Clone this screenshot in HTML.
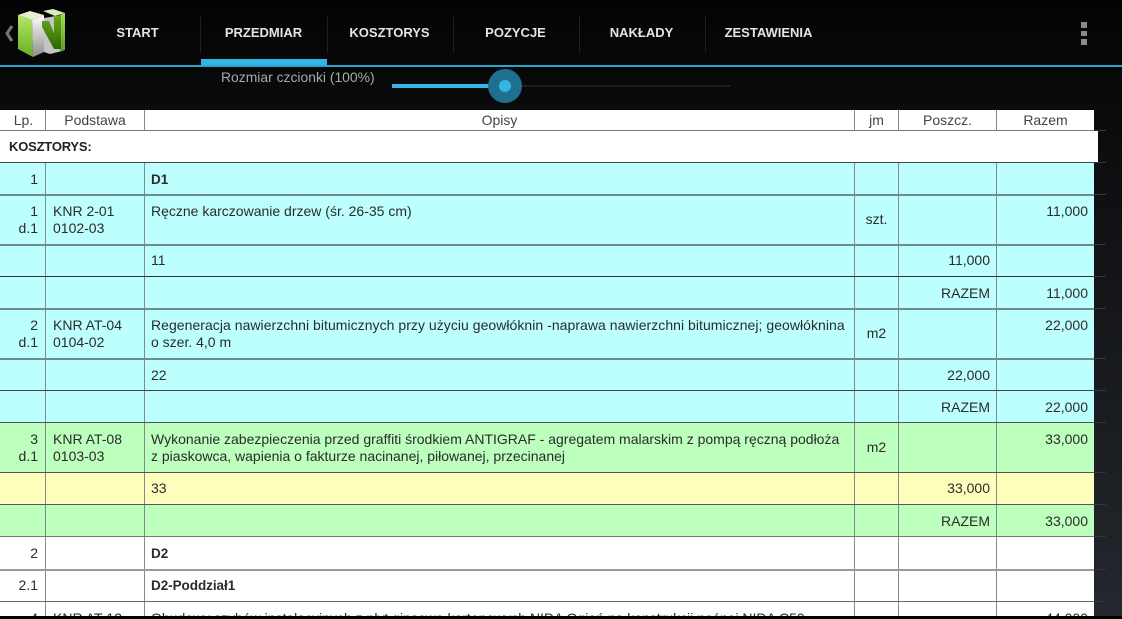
<!DOCTYPE html>
<html lang="pl"><head><meta charset="utf-8"><title>Przedmiar</title>
<style>
html,body{margin:0;padding:0;background:#000;width:1122px;height:619px;overflow:hidden}
#p{position:relative;width:1122px;height:619px;overflow:hidden;font-family:"Liberation Sans",sans-serif}
#bg{position:absolute;left:0;top:0;width:1122px;height:619px;background:linear-gradient(#030303 0,#0a0b0c 110px,#14161a 300px,#23262c 600px)}
.a{position:absolute}
.t{position:absolute;white-space:nowrap;font-size:14px;line-height:18px;color:#2b2b2b;margin-top:-1px}
.r{text-align:right}.c{text-align:center}.b{font-weight:bold;font-size:13.5px;letter-spacing:-.05px;margin-top:0}
.tab{position:absolute;top:25px;font-size:13px;line-height:16px;font-weight:bold;color:#e4e4e4;white-space:nowrap;text-align:center}
.sep{position:absolute;top:15px;width:1px;height:38px;background:#1e1e1e}
.row{position:absolute;left:0;width:1094px}
.h{position:absolute;left:0;width:1094px;height:1px}
.v{position:absolute;width:1px;top:110px;height:507px;background:#7f8c8c}
.tick{position:absolute;left:1094px;width:12px;height:1px;background:#33363b}
</style></head><body><div id="p">
<div id="bg"></div>

<svg class="a" style="left:0;top:0" width="80" height="62" viewBox="0 0 80 62">
<defs>
<linearGradient id="g1" x1="0" y1="0" x2="0" y2="1"><stop offset="0" stop-color="#b4e864"/><stop offset="1" stop-color="#68ad2a"/></linearGradient>
<linearGradient id="g2" x1="0" y1="0" x2="0" y2="1"><stop offset="0" stop-color="#ffffff"/><stop offset="1" stop-color="#8c8c8c"/></linearGradient>
<linearGradient id="g3" x1="0" y1="0" x2="0" y2="1"><stop offset="0" stop-color="#6cab1c"/><stop offset="1" stop-color="#2c6604"/></linearGradient>
<linearGradient id="g4" x1="0" y1="0" x2="0" y2="1"><stop offset="0" stop-color="#a6dc58"/><stop offset="1" stop-color="#5f9c28"/></linearGradient>
</defs>
<path d="M12 26 L7 33.5 L12 41" fill="none" stroke="#777" stroke-width="3"/>
<path d="M18 15 L32 20 L33 57 L18 49 Z" fill="url(#g1)"/>
<path d="M18 15 L30 11 L44 15 L32 20 Z" fill="#e3f2cf"/>
<path d="M44 18 L62 15 L62 51 L50 54 L44 52 Z" fill="#c4c4c4"/>
<path d="M32 20 L44 15 L44 52 L33 57 Z" fill="url(#g2)"/>
<path d="M43 11 L53 9 L65 13 L55 16 Z" fill="#d6edb8"/>
<path d="M60 15 L65 13 L65 50 L60 52 Z" fill="url(#g4)"/>
<path d="M42 21 L49 21 L54 33 L54 17 L61 15 L61 49 L54 49 L42 27 Z" fill="url(#g3)"/>
</svg>

<div class="tab" style="left:75px;width:125px">START</div>
<div class="tab" style="left:201px;width:125px">PRZEDMIAR</div>
<div class="tab" style="left:327px;width:125px">KOSZTORYS</div>
<div class="tab" style="left:453px;width:125px">POZYCJE</div>
<div class="tab" style="left:579px;width:125px">NAKŁADY</div>
<div class="tab" style="left:706px;width:125px">ZESTAWIENIA</div>
<div class="sep" style="left:200px"></div>
<div class="sep" style="left:327px"></div>
<div class="sep" style="left:453px"></div>
<div class="sep" style="left:579px"></div>
<div class="sep" style="left:705px"></div>
<div class="a" style="left:201px;top:59px;width:126px;height:6px;background:#33b5e5"></div>
<div class="a" style="left:0;top:65px;width:1122px;height:2px;background:#2ba3cf"></div>
<div class="a" style="left:1081px;top:22px;width:6px;height:6px;background:#8a8a8a"></div>
<div class="a" style="left:1081px;top:31px;width:6px;height:5px;background:#8a8a8a"></div>
<div class="a" style="left:1081px;top:39px;width:6px;height:6px;background:#8a8a8a"></div>

<div class="t" style="left:221px;top:68px;color:#a8a8a8;font-size:13.9px;margin-top:0">Rozmiar czcionki (100%)</div>
<div class="a" style="left:392px;top:85px;width:338px;height:2px;background:#1c1e20"></div>
<div class="a" style="left:392px;top:84px;width:113px;height:4px;background:#33b5e5"></div>
<div class="a" style="left:488px;top:69px;width:34px;height:34px;border-radius:50%;background:#1f6f8f"></div>
<div class="a" style="left:499px;top:80px;width:12px;height:12px;border-radius:50%;background:#33b5e5"></div>

<!-- backgrounds -->
<div class="row" style="top:110px;height:20px;background:#fff"></div>
<div class="row" style="top:163px;height:259px;background:#bdffff"></div>
<div class="row" style="top:422px;height:50px;background:#bdffbd"></div>
<div class="row" style="top:472px;height:32px;background:#ffffbd"></div>
<div class="row" style="top:504px;height:32px;background:#bdffbd"></div>
<div class="row" style="top:536px;height:81px;background:#fff"></div>

<!-- vertical lines -->
<div class="v" style="left:45px"></div>
<div class="v" style="left:144px"></div>
<div class="v" style="left:854px"></div>
<div class="v" style="left:898px"></div>
<div class="v" style="left:996px"></div>
<div class="a" style="left:0;top:131px;width:1098px;height:31px;background:#fff"></div>

<!-- horizontal lines -->
<div class="h" style="top:130px;background:#777;width:1098px"></div>
<div class="h" style="top:162px;background:#444;width:1098px"></div>
<div class="h" style="top:194px;background:#6f8a8a;height:2px"></div>
<div class="h" style="top:244px;background:#6f8a8a;height:2px"></div>
<div class="h" style="top:276px;background:#333"></div>
<div class="h" style="top:308px;background:#6f8a8a;height:2px"></div>
<div class="h" style="top:358px;background:#6f8a8a;height:2px"></div>
<div class="h" style="top:390px;background:#444"></div>
<div class="h" style="top:422px;background:#555"></div>
<div class="h" style="top:472px;background:#555"></div>
<div class="h" style="top:504px;background:#555"></div>
<div class="h" style="top:536px;background:#777"></div>
<div class="h" style="top:569px;background:#999;height:2px"></div>
<div class="h" style="top:601px;background:#666"></div>
<div class="tick" style="top:130px"></div><div class="tick" style="top:162px"></div><div class="tick" style="top:194px"></div>
<div class="tick" style="top:244px"></div><div class="tick" style="top:276px"></div><div class="tick" style="top:308px"></div>
<div class="tick" style="top:358px"></div><div class="tick" style="top:390px"></div><div class="tick" style="top:422px"></div>
<div class="tick" style="top:472px"></div><div class="tick" style="top:504px"></div><div class="tick" style="top:536px"></div>
<div class="tick" style="top:569px"></div><div class="tick" style="top:601px"></div>

<!-- header -->
<div class="t c" style="left:1px;width:45px;top:112px;color:#444">Lp.</div>
<div class="t c" style="left:46px;width:98px;top:112px;color:#444">Podstawa</div>
<div class="t c" style="left:145px;width:709px;top:112px;color:#444">Opisy</div>
<div class="t c" style="left:855px;width:43px;top:112px;color:#444">jm</div>
<div class="t c" style="left:899px;width:97px;top:112px;color:#444">Poszcz.</div>
<div class="t c" style="left:997px;width:97px;top:112px;color:#444">Razem</div>
<div class="t b" style="left:9px;top:138px;color:#222;font-size:13px;letter-spacing:-.2px">KOSZTORYS:</div>

<!-- rows -->
<div class="t r" style="left:0;width:38px;top:171px">1</div>
<div class="t b" style="left:151px;top:171px">D1</div>

<div class="t r" style="left:0;width:38px;top:203px">1</div>
<div class="t r" style="left:0;width:38px;top:220px">d.1</div>
<div class="t" style="left:53px;top:203px">KNR 2-01</div>
<div class="t" style="left:53px;top:220px">0102-03</div>
<div class="t" style="left:151px;top:203px">Ręczne karczowanie drzew (śr. 26-35 cm)</div>
<div class="t c" style="left:855px;width:43px;top:211px">szt.</div>
<div class="t r" style="left:997px;width:91px;top:203px">11,000</div>

<div class="t" style="left:151px;top:252px">11</div>
<div class="t r" style="left:899px;width:91px;top:252px">11,000</div>
<div class="t r" style="left:899px;width:91px;top:285px">RAZEM</div>
<div class="t r" style="left:997px;width:91px;top:285px">11,000</div>

<div class="t r" style="left:0;width:38px;top:317px">2</div>
<div class="t r" style="left:0;width:38px;top:334px">d.1</div>
<div class="t" style="left:53px;top:317px">KNR AT-04</div>
<div class="t" style="left:53px;top:334px">0104-02</div>
<div class="t" style="left:151px;top:317px;letter-spacing:.04px">Regeneracja nawierzchni bitumicznych przy użyciu geowłóknin -naprawa nawierzchni bitumicznej; geowłóknina</div>
<div class="t" style="left:151px;top:334px">o szer. 4,0 m</div>
<div class="t c" style="left:855px;width:43px;top:325px">m2</div>
<div class="t r" style="left:997px;width:91px;top:317px">22,000</div>

<div class="t" style="left:151px;top:367px">22</div>
<div class="t r" style="left:899px;width:91px;top:367px">22,000</div>
<div class="t r" style="left:899px;width:91px;top:399px">RAZEM</div>
<div class="t r" style="left:997px;width:91px;top:399px">22,000</div>

<div class="t r" style="left:0;width:38px;top:431px">3</div>
<div class="t r" style="left:0;width:38px;top:448px">d.1</div>
<div class="t" style="left:53px;top:431px">KNR AT-08</div>
<div class="t" style="left:53px;top:448px">0103-03</div>
<div class="t" style="left:151px;top:431px">Wykonanie zabezpieczenia przed graffiti środkiem ANTIGRAF - agregatem malarskim z pompą ręczną podłoża</div>
<div class="t" style="left:151px;top:448px">z piaskowca, wapienia o fakturze nacinanej, piłowanej, przecinanej</div>
<div class="t c" style="left:855px;width:43px;top:439px">m2</div>
<div class="t r" style="left:997px;width:91px;top:431px">33,000</div>

<div class="t" style="left:151px;top:480px">33</div>
<div class="t r" style="left:899px;width:91px;top:480px">33,000</div>
<div class="t r" style="left:899px;width:91px;top:513px">RAZEM</div>
<div class="t r" style="left:997px;width:91px;top:513px">33,000</div>

<div class="t r" style="left:0;width:38px;top:545px">2</div>
<div class="t b" style="left:151px;top:545px">D2</div>
<div class="t r" style="left:0;width:38px;top:577px">2.1</div>
<div class="t b" style="left:151px;top:577px">D2-Poddział1</div>

<div class="t r" style="left:0;width:38px;top:610px">4</div>
<div class="t" style="left:53px;top:610px">KNR AT-12</div>
<div class="t" style="left:151px;top:610px">Obudowy szybów instalacyjnych z płyt gipsowo kartonowych NIDA Ogień na konstrukcji nośnej NIDA C50</div>
<div class="t r" style="left:997px;width:91px;top:610px">44,000</div>

<div class="a" style="left:0;top:616px;width:1122px;height:3px;background:#000"></div>
</div></body></html>
